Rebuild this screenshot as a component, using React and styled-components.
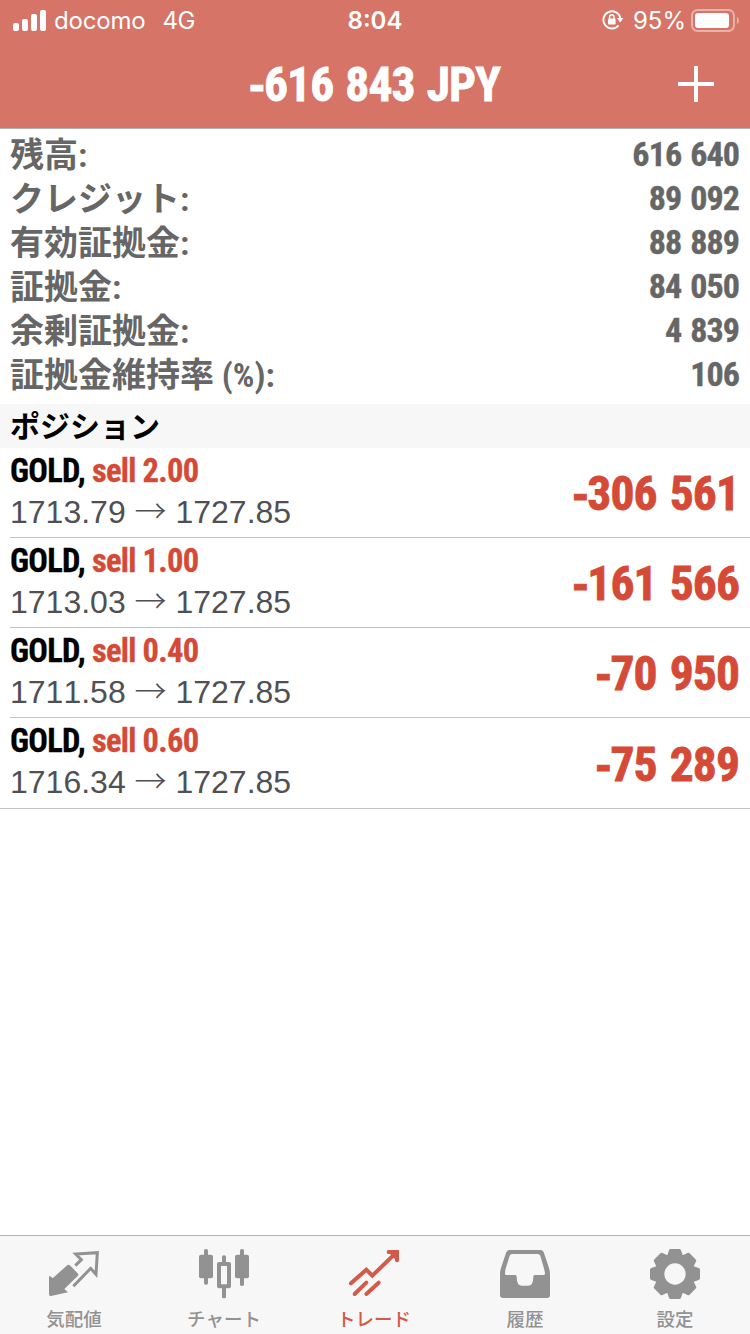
import React from "react";
import styled, { createGlobalStyle } from "styled-components";

const account = [
  { label: "残高:", value: "616 640" },
  { label: "クレジット:", value: "89 092" },
  { label: "有効証拠金:", value: "88 889" },
  { label: "証拠金:", value: "84 050" },
  { label: "余剰証拠金:", value: "4 839" },
  { label: "証拠金維持率 (%):", value: "106" },
];

const positions = [
  { symbol: "GOLD", side: "sell 2.00", open: "1713.79", now: "1727.85", loss: "306 561" },
  { symbol: "GOLD", side: "sell 1.00", open: "1713.03", now: "1727.85", loss: "161 566" },
  { symbol: "GOLD", side: "sell 0.40", open: "1711.58", now: "1727.85", loss: "70 950" },
  { symbol: "GOLD", side: "sell 0.60", open: "1716.34", now: "1727.85", loss: "75 289" },
];

const tabs = [
  { label: "気配値", icon: <QuotesIcon /> },
  { label: "チャート", icon: <ChartIcon /> },
  { label: "トレード", icon: <TradeIcon />, active: true },
  { label: "履歴", icon: <HistoryIcon /> },
  { label: "設定", icon: <SettingsIcon /> },
];

export default function App() {
  return (
    <>
      <GlobalStyle />
      <Screen>
        <Header>
          <StatusBar>
            <StatusSide>
              <SignalIcon />
              <Carrier>docomo</Carrier>
              <Network>4G</Network>
            </StatusSide>
            <Clock>8:04</Clock>
            <StatusSide $end>
              <LockIcon />
              <Percent>95%</Percent>
              <BatteryIcon />
            </StatusSide>
          </StatusBar>
          <NavBar>
            <Title>
              <Minus>-</Minus>616 843 JPY
            </Title>
            <AddButton aria-label="add">
              <svg width="36" height="36" viewBox="0 0 36 36">
                <path d="M18 0v36M0 18h36" stroke="#fff" strokeWidth="4" />
              </svg>
            </AddButton>
          </NavBar>
        </Header>

        <Account>
          {account.map((a) => (
            <AccountRow key={a.label}>
              <AccountLabel>{a.label}</AccountLabel>
              <AccountValue>{a.value}</AccountValue>
            </AccountRow>
          ))}
        </Account>

        <SectionTitle>ポジション</SectionTitle>
        <Positions>
          {positions.map((p) => (
            <Position key={p.side}>
              <Details>
                <Deal>
                  {p.symbol}, <Side>{p.side}</Side>
                </Deal>
                <Prices>
                  {p.open} <Arrow>→</Arrow> {p.now}
                </Prices>
              </Details>
              <Profit>
                <Minus>-</Minus>
                {p.loss}
              </Profit>
            </Position>
          ))}
        </Positions>

        <TabBar>
          {tabs.map((t) => (
            <Tab key={t.label} $active={t.active}>
              {t.icon}
              <TabLabel>{t.label}</TabLabel>
            </Tab>
          ))}
        </TabBar>
      </Screen>
    </>
  );
}

function SignalIcon() {
  return (
    <svg width="33" height="21" viewBox="0 0 33 21" fill="#fff">
      <rect x="0" y="13" width="6" height="8" rx="2" />
      <rect x="9" y="9" width="6" height="12" rx="2" />
      <rect x="18" y="4" width="6" height="17" rx="2" />
      <rect x="27" y="0" width="6" height="21" rx="2" />
    </svg>
  );
}

function LockIcon() {
  return (
    <svg width="22" height="20" viewBox="0 0 22 20" fill="none">
      <path
        d="M16.6 15.4A8.6 8.6 0 1 1 18.4 8"
        stroke="#fff"
        strokeWidth="1.8"
      />
      <path d="M15 8h6.4l-3.2 4.4z" fill="#fff" />
      <rect x="6" y="8.6" width="7.6" height="6" rx="0.8" fill="#fff" />
      <path d="M7.6 9V7a2.2 2.2 0 0 1 4.4 0v2" stroke="#fff" strokeWidth="1.4" />
    </svg>
  );
}

function BatteryIcon() {
  return (
    <svg width="48" height="23" viewBox="0 0 48 23">
      <rect
        x="1"
        y="1"
        width="42"
        height="21"
        rx="5.5"
        fill="none"
        stroke="#fff"
        strokeOpacity="0.45"
        strokeWidth="2"
      />
      <rect x="4" y="4" width="34" height="15" rx="3" fill="#fff" />
      <path d="M46 8c2.4 1.4 2.4 5.6 0 7z" fill="#fff" fillOpacity="0.5" />
    </svg>
  );
}

function QuotesIcon() {
  return (
    <svg width="50" height="50" viewBox="0 0 150 150">
      <path
        d="M0 82Q2 80 5 83L12 87L53 50Q59 45 64 50L86 73Q90 77 86 81L46 120L57 130L6 141Q0 142 0 136Z"
        fill="currentColor"
      />
      <path
        d="M73 112L125 58L141 76L145 11L80 15L97 32L79 50"
        fill="none"
        stroke="currentColor"
        strokeWidth="9"
      />
    </svg>
  );
}

function ChartIcon() {
  return (
    <svg width="50" height="50" viewBox="0 0 150 150" fill="currentColor">
      <rect x="15" y="0" width="12" height="107" rx="5" />
      <rect x="0" y="17" width="42" height="71" rx="6" />
      <rect x="123" y="0" width="12" height="111" rx="5" />
      <rect x="108" y="17" width="42" height="71" rx="6" />
      <rect x="69" y="19" width="12" height="24" rx="5" />
      <rect x="69" y="112" width="12" height="36" rx="5" />
      <path
        fillRule="evenodd"
        d="M60 39h30q6 0 6 6v67q0 6-6 6h-30q-6 0-6-6v-67q0-6 6-6zM66 51v55h18v-55z"
      />
    </svg>
  );
}

function TradeIcon() {
  return (
    <svg
      width="50"
      height="50"
      viewBox="0 0 150 150"
      fill="none"
      stroke="currentColor"
      strokeWidth="12"
      strokeLinecap="round"
      strokeLinejoin="miter"
    >
      <path d="M6 103L52 62L70 80L136 16" />
      <path d="M119 9H144V34" />
      <path d="M130 14L140 24" />
      <path d="M17 135L52 101M52 135L89 101" />
    </svg>
  );
}

function HistoryIcon() {
  return (
    <svg width="50" height="50" viewBox="0 0 150 150" fill="currentColor">
      <path
        fillRule="evenodd"
        d="M29 3H121Q128 3 131 9L147 57Q150 66 150 76V138Q150 147 141 147H9Q0 147 0 138V76Q0 66 3 57L19 9Q22 3 29 3ZM37 15Q31 15 29 20L16 62L15 74Q15 78 19 78H46Q50 78 50 83Q50 110 66 110H84Q100 110 100 83Q100 78 104 78H131Q136 78 135 73L133 62L121 20Q119 15 113 15Z"
      />
    </svg>
  );
}

function SettingsIcon() {
  return (
    <svg width="50" height="50" viewBox="-75 -75 150 150">
      {[0, 45, 90, 135].map((angle) => (
        <path
          key={angle}
          transform={`rotate(${angle})`}
          d="M-13 -75H13Q17 -75 18 -71L24 -54V54L18 71Q17 75 13 75H-13Q-17 75 -18 71L-24 54V-54L-18 -71Q-17 -75 -13 -75Z"
          fill="currentColor"
        />
      ))}
      <circle r="61" fill="currentColor" />
      <circle r="32" fill="#f7f7f7" />
    </svg>
  );
}

const GlobalStyle = createGlobalStyle`
  * {
    box-sizing: border-box;
  }
  body {
    margin: 0;
    background: #ffffff;
  }
`;

const Screen = styled.div`
  display: flex;
  flex-direction: column;
  width: 750px;
  height: 1334px;
  overflow: hidden;
  background: #ffffff;
  font-family: "Roboto Condensed", "Noto Sans CJK JP", sans-serif;
`;

const Header = styled.header`
  height: 129px;
  background: #d57467;
  border-bottom: 1px solid #b2b2b2;
  color: #ffffff;
`;

const StatusBar = styled.div`
  display: grid;
  grid-template-columns: 1fr auto 1fr;
  align-items: center;
  height: 40px;
  padding: 0 11px 0 13px;
  font-family: Inter, sans-serif;
  font-size: 24px;
  line-height: 38px;
`;

const StatusSide = styled.div`
  display: flex;
  align-items: center;
  justify-content: ${(props) => (props.$end ? "flex-end" : "flex-start")};
`;

const Carrier = styled.span`
  margin-left: 8px;
  padding-top: 2px;
  letter-spacing: -0.2px;
`;

const Network = styled.span`
  margin-left: 17px;
  padding-top: 2px;
  letter-spacing: -0.4px;
`;

const Clock = styled.span`
  padding: 2px 2px 0 0;
  font-weight: 600;
`;

const Percent = styled.span`
  margin: 0 5px 0 9px;
  padding-top: 2px;
`;

const NavBar = styled.div`
  display: grid;
  grid-template-columns: 1fr auto 1fr;
  align-items: center;
  height: 88px;
  padding: 0 36px;
`;

const Title = styled.h1`
  grid-column: 2;
  margin: 0;
  padding: 2px 1px 0 0;
  font-size: 47.5px;
  font-weight: 700;
  line-height: 86px;
  letter-spacing: -0.9px;
  word-spacing: 2px;
  white-space: nowrap;
  -webkit-text-stroke: 0.8px currentColor;
`;

const Minus = styled.span`
  font-family: "Liberation Sans", sans-serif;
`;

const AddButton = styled.button`
  justify-self: end;
  display: flex;
  padding: 0;
  border: 0;
  background: none;
`;

const Account = styled.section`
  padding: 3px 11px 8px 10px;
`;

const AccountRow = styled.div`
  display: flex;
  justify-content: space-between;
  height: 44px;
  color: #666666;
  font-size: 34px;
  font-weight: 700;
  line-height: 44px;
`;

const AccountLabel = styled.span`
  padding-top: 1px;
`;

const AccountValue = styled.span`
  letter-spacing: -0.9px;
  word-spacing: 2px;
  -webkit-text-stroke: 0.4px currentColor;
`;

const SectionTitle = styled.h2`
  height: 44px;
  margin: 0;
  padding: 1px 10px 0;
  background: #f7f7f7;
  color: #000000;
  font-size: 30px;
  font-weight: 700;
  line-height: 43px;
`;

const Positions = styled.section`
  border-bottom: 1px solid #c4c4c4;
`;

const Position = styled.div`
  display: flex;
  align-items: center;
  justify-content: space-between;
  height: 90px;
  margin-left: 10px;
  padding-right: 11px;
  border-bottom: 1px solid #c4c4c4;
  &:last-child {
    border-bottom: 0;
  }
`;

const Details = styled.div`
  padding-bottom: 4px;
`;

const Deal = styled.div`
  color: #000000;
  font-size: 32.5px;
  font-weight: 700;
  line-height: 42px;
  letter-spacing: -0.7px;
  -webkit-text-stroke: 0.3px currentColor;
`;

const Side = styled.span`
  color: #d54a36;
`;

const Prices = styled.div`
  color: #505054;
  font-family: "Liberation Sans", sans-serif;
  font-size: 32px;
  font-kerning: none;
  line-height: 40px;
`;

const Arrow = styled.span`
  font-family: "Noto Sans CJK JP", sans-serif;
  font-weight: 300;
  line-height: 1;
`;

const Profit = styled.div`
  padding-top: 3px;
  color: #d54a36;
  font-size: 47.5px;
  font-weight: 700;
  letter-spacing: -0.9px;
  word-spacing: 3px;
  -webkit-text-stroke: 0.8px currentColor;
`;

const TabBar = styled.nav`
  display: grid;
  grid-template-columns: repeat(5, 1fr);
  height: 99px;
  margin-top: auto;
  border-top: 1px solid #b2b2b2;
  background: #f7f7f7;
`;

const Tab = styled.div`
  display: flex;
  flex-direction: column;
  align-items: center;
  padding-top: 13px;
  color: ${(props) => (props.$active ? "#d35a49" : "#929292")};
  &:nth-child(-n + 3) {
    padding-right: 2px;
  }
`;

const TabLabel = styled.span`
  margin-top: 5px;
  font-family: "Noto Sans CJK JP", sans-serif;
  font-size: 18.5px;
  font-weight: 500;
  line-height: 28px;
`;
